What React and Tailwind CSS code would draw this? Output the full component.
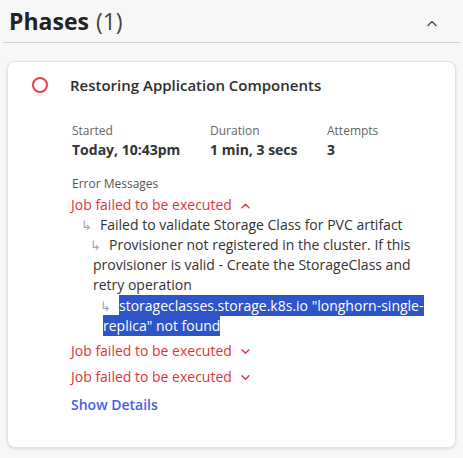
import React from "react";

function ChevronUp({ className }) {
  return (
    <svg className={className} viewBox="0 0 12 8" fill="none" stroke="currentColor" strokeWidth="1.6" strokeLinecap="round" strokeLinejoin="round">
      <path d="M2 6.5 L6 2.5 L10 6.5" />
    </svg>
  );
}
function ChevronDown({ className }) {
  return (
    <svg className={className} viewBox="0 0 12 8" fill="none" stroke="currentColor" strokeWidth="1.6" strokeLinecap="round" strokeLinejoin="round">
      <path d="M2 2 L6 6 L10 2" />
    </svg>
  );
}
function Arrow() {
  return <span className="text-[#a0a4a8] text-[13px] leading-none -ml-[3px] mr-[8px]">↳</span>;
}

export default function App() {
  return (
    <div
      className="w-[463px] h-[458px] bg-[#f7f7f7] overflow-hidden text-[#333]"
      style={{ fontFamily: '"Open Sans", "Noto Sans", sans-serif' }}
    >
      <div className="flex items-center justify-between pl-[8px] pr-[22px] h-[43px] mx-[3px] border-b border-[#cfcfcf]">
        <div className="flex items-baseline leading-none -ml-[2px]">
          <span className="text-[23px] font-bold text-[#222]">Phases</span>
          <span className="text-[23px] text-[#444] ml-[7px]">(1)</span>
        </div>
        <ChevronUp className="w-[12px] h-[8px] text-[#555] mt-[4px]" />
      </div>
      <div className="mx-[7px] mt-[18px] h-[387px] w-[449px] bg-white rounded-[8px] border border-[#e2e2e2] shadow-[0_1px_3px_rgba(0,0,0,0.12)] pt-[13px] pl-[24px]">
        <div className="flex items-center h-[20px]">
          <div className="w-[16px] h-[16px] rounded-full border-2 border-[#e8404a]" />
          <div className="ml-[22px] text-[15px] font-semibold text-[#2e2e2e]">Restoring Application Components</div>
        </div>
        <div className="flex mt-[27px] pl-[40px] text-[12px]">
          <div className="w-[138px]">
            <div className="text-[#666] leading-[18px]">Started</div>
            <div className="text-[14px] font-bold text-[#333] leading-[20px]">Today, 10:43pm</div>
          </div>
          <div className="w-[117px]">
            <div className="text-[#666] leading-[18px]">Duration</div>
            <div className="text-[14px] font-bold text-[#333] leading-[20px]">1 min, 3 secs</div>
          </div>
          <div>
            <div className="text-[#666] leading-[18px]">Attempts</div>
            <div className="text-[14px] font-bold text-[#333] leading-[20px]">3</div>
          </div>
        </div>
        <div className="pl-[40px] mt-[15px] pr-[20px]">
          <div className="text-[12px] text-[#555] leading-[18px]">Error Messages</div>
          <div className="flex items-center text-[14px] text-[#e0343c] leading-[20px] mt-[2px] -ml-[1px]">
            <span>Job failed to be executed</span>
            <ChevronUp className="w-[11px] h-[7px] ml-[8px]" />
          </div>
          <div className="text-[14px] text-[#333] leading-[20px]">
            <div className="pl-[12px]">
              <Arrow />Failed to validate Storage Class for PVC artifact
            </div>
            <div className="pl-[21px]">
              <Arrow />Provisioner not registered in the cluster. If this provisioner is valid - Create the StorageClass and retry operation
            </div>
            <div className="pl-[31px] pr-[4px] mt-[1px]">
              <Arrow />
              <span className="bg-[#2d55c8] text-white box-decoration-clone py-[1px]">storageclasses.storage.k8s.io "longhorn-single-replica" not found</span>
            </div>
          </div>
          <div className="flex items-center text-[14px] text-[#e0343c] leading-[26px] mt-[2px] -ml-[1px]">
            <span>Job failed to be executed</span>
            <ChevronDown className="w-[11px] h-[7px] ml-[8px]" />
          </div>
          <div className="flex items-center text-[14px] text-[#e0343c] leading-[26px] -ml-[1px]">
            <span>Job failed to be executed</span>
            <ChevronDown className="w-[11px] h-[7px] ml-[8px]" />
          </div>
          <div className="text-[14px] font-semibold text-[#4a5ee8] leading-[20px] mt-[5px] -ml-[1px]">Show Details</div>
        </div>
      </div>
    </div>
  );
}
